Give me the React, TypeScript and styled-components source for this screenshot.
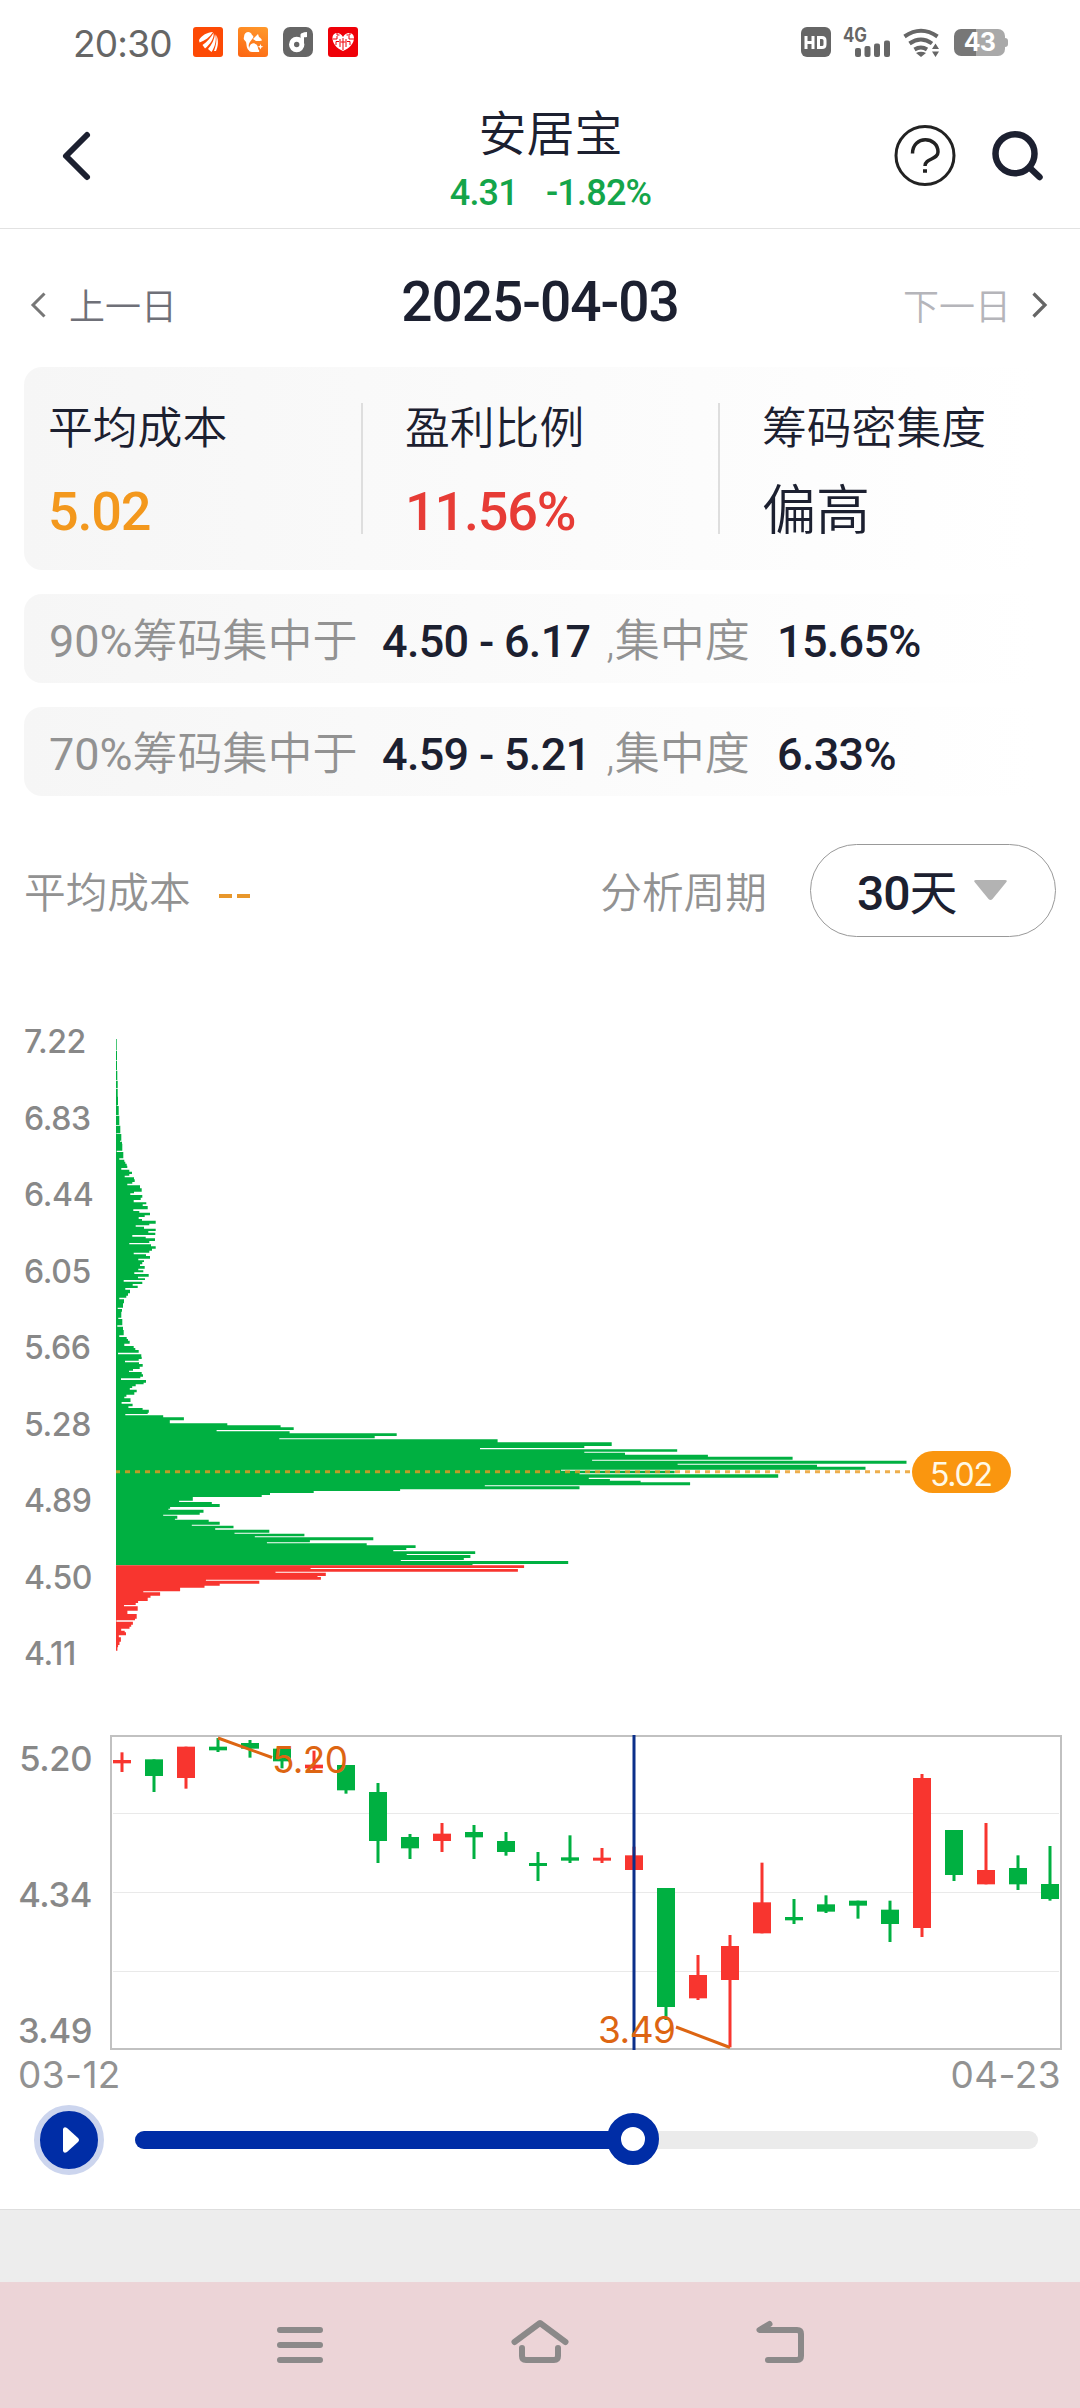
import React from "react";
import styled, { createGlobalStyle, css } from "styled-components";

const DIN = `Roboto, "Noto Sans CJK SC", sans-serif`;
const UI = `Inter, "Noto Sans CJK SC", sans-serif`;
const INK = "#1c2030";
const GREEN = "#00b041";
const RED = "#f8352f";
const ACCENT = "#dd6512";
const BLUE = "#002da6";

const Global = createGlobalStyle`
  * { box-sizing: border-box; }
  body { margin: 0; background: #fff; }
  svg { display: block; flex: none; }
`;

const Page = styled.main`
  width: 1080px;
  height: 2408px;
  display: flex;
  flex-direction: column;
  background: #fff;
  color: ${INK};
  font-family: ${DIN};
  white-space: nowrap;
  overflow: hidden;
`;

/* ---------- status bar ---------- */
const StatusBar = styled.header`
  height: 84px;
  padding: 0 72px 0 73px;
  display: flex;
  align-items: center;
  justify-content: space-between;
`;
const StatusSide = styled.div<{ $gap: number }>`
  display: flex;
  align-items: center;
  gap: ${(p) => p.$gap}px;
`;
const Clock = styled.span`
  width: 105px;
  font: 400 37px/44px ${UI};
  letter-spacing: -0.8px;
  color: #666;
  padding-top: 4px;
`;
const AppIcon = styled.span<{ $bg: string; $r?: number }>`
  width: 30px;
  height: 30px;
  border-radius: ${(p) => p.$r ?? 3}px;
  background: ${(p) => p.$bg};
`;
const Battery = styled.span`
  display: flex;
  align-items: center;
`;
const BatteryBody = styled.span`
  width: 51px;
  height: 27px;
  border-radius: 7px;
  display: flex;
  align-items: center;
  justify-content: center;
  background: linear-gradient(90deg, #777 43%, #a9a9a9 43%);
  color: #fff;
  font: 700 25px/27px ${UI};
  letter-spacing: -0.8px;
`;
const BatteryCap = styled.span`
  width: 3px;
  height: 9px;
  border-radius: 0 3px 3px 0;
  background: #a9a9a9;
`;

/* ---------- title bar ---------- */
const TitleBar = styled.nav`
  height: 145px;
  border-bottom: 1px solid #e2e2e2;
  padding: 0 35px 0 60px;
  display: grid;
  grid-template-columns: 1fr auto 1fr;
  align-items: center;
`;
const TitleStack = styled.div`
  display: flex;
  flex-direction: column;
  align-items: center;
  height: 130px;
  margin-right: 4px;
`;
const StockName = styled.h1`
  margin: 10px 0 0;
  font: 350 48px/68px ${DIN};
`;
const Quote = styled.div`
  display: flex;
  gap: 28px;
  font: 500 36px/42px ${DIN};
  letter-spacing: -0.8px;
  color: #14a54a;
  margin-top: 3px;
`;
const TitleActions = styled.div`
  display: flex;
  justify-content: flex-end;
  align-items: center;
  gap: 35px;
`;

/* ---------- day switcher ---------- */
const DayRow = styled.section`
  height: 138px;
  padding: 8px 32px 0 30px;
  display: grid;
  grid-template-columns: 1fr auto 1fr;
  align-items: center;
`;
const DayLink = styled.div<{ $muted?: boolean }>`
  display: flex;
  align-items: center;
  gap: ${(p) => (p.$muted ? 21 : 23)}px;
  margin-top: 6px;
  font: 350 36px/44px ${DIN};
  color: ${(p) => (p.$muted ? "#b5b5ba" : "#6f7078")};
  ${(p) => p.$muted && css`justify-content: flex-end;`}
`;
const DayText = styled.span`
  padding-top: 6px;
`;
const CurrentDay = styled.h2`
  margin: 0;
  padding-left: 2px;
  font: 500 55px/60px ${DIN};
  letter-spacing: -1px;
`;

/* ---------- summary cards ---------- */
const fade = css`
  background: linear-gradient(90deg, #f6f6f6, #fff 98%);
  border-radius: 18px;
  margin: 0 24px;
`;
const Summary = styled.section`
  ${fade}
  height: 203px;
  display: flex;
  align-items: center;
`;
const Metric = styled.div<{ $first?: boolean }>`
  flex: none;
  width: ${(p) => (p.$first ? 337 : 357)}px;
  height: 131px;
  padding: 3px 0 0 ${(p) => (p.$first ? 24 : 42)}px;
  ${(p) => !p.$first && css`border-left: 2px solid #dedede;`}
  display: flex;
  flex-direction: column;
`;
const MetricName = styled.span`
  font: 350 44.8px/46px ${DIN};
`;
const MetricValue = styled.span<{ $color?: string; $cjk?: boolean }>`
  margin-top: ${(p) => (p.$cjk ? 30 : 30)}px;
  color: ${(p) => p.$color ?? INK};
  font: ${(p) => (p.$cjk ? "350 54px" : "500 54px")}/60px ${DIN};
  letter-spacing: ${(p) => (p.$cjk ? 0 : -1.2)}px;
`;
const RangeRow = styled.section`
  ${fade}
  height: 89px;
  margin-top: 24px;
  padding: 6px 0 0 25px;
  display: flex;
  align-items: center;
  font: 400 45px/60px ${DIN};
  color: #929292;
`;
const RangeLabel = styled.span<{ $w: number }>`
  width: ${(p) => p.$w}px;
  font-weight: 350;
`;
const Percent = styled.span`
  font-weight: 400;
`;
const RangeValue = styled.span<{ $w?: number }>`
  width: ${(p) => (p.$w ? p.$w + "px" : "auto")};
  font-weight: 500;
  letter-spacing: -0.7px;
  color: ${INK};
`;

/* ---------- period filter ---------- */
const FilterRow = styled.section`
  height: 93px;
  margin-top: 48px;
  padding: 0 24px;
  display: flex;
  align-items: center;
  font: 350 41.7px/50px ${DIN};
  color: #929292;
`;
const FilterLabel = styled.span`
  padding-top: 6px;
`;
const Dashes = styled.span`
  flex: 1;
  display: flex;
  padding: 11px 0 0 28px;
  gap: 5px;
`;
const Dash = styled.i`
  width: 13px;
  height: 4px;
  background: #e8972b;
`;
const PeriodButton = styled.button`
  width: 246px;
  height: 93px;
  margin-left: 43px;
  padding: 0 0 0 46px;
  border: 1px solid #999;
  border-radius: 47px;
  background: #fff;
  display: flex;
  align-items: center;
  gap: 19px;
  font: 500 48px/60px ${DIN};
  color: ${INK};
`;
const PeriodText = styled.span`
  display: flex;
  padding-top: 6px;
  letter-spacing: -1px;
  width: 98px;
`;
const PeriodUnit = styled.span`
  font-weight: 400;
`;

/* ---------- charts ---------- */
const ChipPanel = styled.section`
  margin-top: 84px;
  height: 652px;
  display: flex;
`;
const ChipAxis = styled.div`
  width: 116px;
  padding: 1px 0 0 24px;
  margin-bottom: -1px;
  display: flex;
  flex-direction: column;
  justify-content: space-between;
  font: 500 32px/40px ${UI};
  letter-spacing: -0.4px;
  color: #888;
`;
const CandlePanel = styled.section`
  margin-top: 62px;
  height: 315px;
  display: flex;
`;
const CandleAxis = styled.div`
  width: 110px;
  padding: 4px 18px 0 0;
  margin-bottom: -1px;
  display: flex;
  flex-direction: column;
  justify-content: space-between;
  text-align: right;
  font: 500 34.5px/40px ${UI};
  letter-spacing: -0.4px;
  color: #888;
`;
const DateAxis = styled.div`
  height: 49px;
  padding: 0 19px 0 18px;
  display: flex;
  justify-content: space-between;
  font: 400 37px/50px ${UI};
  letter-spacing: 0.4px;
  color: #929292;
`;

/* ---------- playback ---------- */
const Playback = styled.section`
  height: 110px;
  padding: 6px 42px 0 34px;
  display: flex;
  align-items: flex-start;
  gap: 31px;
`;
const PlayButton = styled.button`
  width: 70px;
  height: 70px;
  padding: 0 0 0 3px;
  border: 6px solid #ccd5ee;
  border-radius: 50%;
  background: ${BLUE};
  display: flex;
  align-items: center;
  justify-content: center;
`;
const Track = styled.div`
  flex: 1;
  height: 18px;
  margin-top: 26px;
  border-radius: 9px;
  background: #ebebeb;
  display: flex;
  align-items: center;
`;
const TrackFill = styled.div`
  width: 490px;
  height: 18px;
  border-radius: 9px 0 0 9px;
  background: ${BLUE};
`;
const Thumb = styled.div`
  width: 52px;
  height: 52px;
  margin: -3px 0 0 -18px;
  border: 14px solid ${BLUE};
  border-radius: 50%;
  background: #fff;
`;

const GreyStrip = styled.div`
  height: 73px;
  border-top: 1px solid #dedede;
  background: #ededed;
`;
const SystemNav = styled.footer`
  flex: 1;
  background: #ecd4d7;
  display: flex;
  justify-content: center;
  gap: 180px;
  padding-top: 30px;
`;

/* Run-length outline of the chip histogram: [end of run, right edge]. */
type Run = [number, number];
const place = (runs: Run[], ox: number, sx: number, oy: number, sy: number): Run[] =>
  runs.map(([y, x]) => [oy + y / sy, ox + x / sx]);

const upper: Run[] = [
  [120,350],[122,348],[150,351],[152,348],[180,351],[182,348],[210,352],[212,348],[234,353],[236,348],[260,353],[286,354],[288,350],[315,356],[317,348],[345,358],[347,348],[370,361],[372,349],[392,364],[395,360],[401,366],[422,367],[426,350],[445,370],[449,358],[455,373],[461,376],[467,380],[474,382],[479,364],[485,388],[492,396],[497,388],[502,374],[508,402],[516,404],[521,397],[526,382],[535,420],[545,425],[550,402],[555,391],[563,427],[570,422],[577,401],[583,439],[588,428],[598,443],[603,400],[608,418],[616,450],[621,434],[627,416],[632,426],[641,467],[646,448],[650,407],[656,432],[663,467],[668,445],[675,466],[680,397],[685,437],[693,465],[699,448],[703,388],[709,453],[716,467],[722,456],[728,448],[733,401],[738,438],[746,450],[751,415],[756,432],[763,427],[768,420],[776,434],[781,415],[787,430],[792,403],[800,446],[805,414],[810,435],[815,371],[822,427],[827,398],[834,413],[839,376],[850,390],[857,384],[863,379],[868,358],[880,372],[893,369],[897,353],[905,366],[923,364],[927,355],[946,367],[950,352],[960,369],[976,371],[981,358],[987,380],[992,384],[1001,389],[1008,373],[1014,401],[1020,406],[1028,416],[1033,354],[1040,424],[1047,425],[1052,416],[1057,375],[1062,417],[1070,428],[1077,419],[1082,399],[1086,387],[1093,425],[1100,429],[1105,421],[1110,363],
];
const shoulder: Run[] = [
  [8,424],[13,417],[19,394],[24,384],[29,377],[37,397],[44,390],[50,367],[55,361],[66,379],[71,353],[79,385],[84,373],[89,414],[98,432],[102,429],[106,364],[112,474],[121,534],[130,493],[136,660],[142,815],[150,853],[154,629],[160,841],[168,1152],[175,1088],[178,811],[187,1445],
];
const peak: Run[] = [
  [138,302],[144,228],[148,-54],[155,479],[158,228],[164,338],[170,562],[179,791],[182,249],[191,1099],[194,480],[200,857],[209,988],[212,165],[220,472],[223,215],[233,752],[237,240],[242,297],[247,380],[256,514],[259,-41],[268,215],
];
const lower: Run[] = [
  [333,1162],[339,911],[345,784],[351,760],[362,560],[366,520],[372,615],[381,638],[386,494],[389,489],[398,591],[404,580],[407,474],[416,515],[419,508],[425,606],[434,638],[437,557],[445,678],[449,625],[458,782],[461,681],[469,884],[472,740],[481,1084],[487,900],[490,775],[496,1065],[504,1207],[510,1180],[514,1142],[522,1380],[525,1181],[534,1366],[540,1347],[543,1164],[552,1650],[556,1372],
];
const profit: Run[] = [
  [564,1522],[567,902],[575,1504],[578,800],[588,946],[591,922],[599,932],[602,598],[611,753],[617,638],[623,594],[634,523],[637,416],[647,465],[653,437],[663,429],[669,401],[675,394],[679,360],[692,400],[702,370],[716,397],[721,392],[725,338],[734,386],[740,381],[746,376],[752,352],[757,362],[766,366],[772,345],[785,351],[795,347],[802,343],[812,341],
];
const outline = (start: number, runs: Run[]) =>
  `M116 ${start}` + runs.map(([y, x]) => `H${x.toFixed(1)}V${y.toFixed(1)}`).join("") + "H116Z";

const greenPath = outline(1039, [
  ...place(upper, 0, 3, 1010, 3),
  ...place(shoulder, 0, 2.904, 1380, 3),
  ...place(peak, 500, 2.7034, 1400, 3),
  ...place(lower, 0, 2.904, 1380, 3),
]);
const redPath = outline(1565.3, place(profit, 0, 2.904, 1380, 3));

/* [up?, high, body top, body bottom, low] in thirds of a pixel */
const candles: [number, number, number, number, number][] = [
  [1,127,150,160,186],[0,148,148,198,246],[1,110,110,204,236],[0,84,110,121,126],[0,90,99,116,143],
  [0,116,116,154,175],[1,122,164,175,180],[0,165,165,241,251],[0,219,246,393,459],[0,372,381,415,447],
  [1,339,371,393,426],[0,345,366,382,447],[0,366,393,426,437],[0,426,459,468,513],[0,376,442,452,459],
  [1,414,443,452,459],[1,410,436,480,480],[0,534,534,891,930],[1,735,795,865,870],[1,675,708,810,1012],
  [1,458,577,670,670],[0,567,621,631,642],[0,556,583,605,609],[0,572,572,587,626],[0,572,599,642,696],
  [1,192,204,654,681],[0,360,360,495,513],[1,339,480,523,523],[0,436,474,523,540],[0,408,522,567,572],
];

const Label = styled.text<{ $size: number; $fill: string }>`
  font-family: ${UI};
  font-size: ${(p) => p.$size}px;
  fill: ${(p) => p.$fill};
`;

function ChipChart() {
  return (
    <svg width="964" height="652" viewBox="116 1021 964 652">
      <path d={greenPath} fill={GREEN} />
      <path d={redPath} fill={RED} />
      <path d="M116 1471.8H912" stroke="#e89a20" strokeOpacity=".8" strokeWidth="3" strokeDasharray="5 5" strokeDashoffset="1" />
      <rect x="912" y="1451" width="99" height="42" rx="21" fill="#fa960f" />
      <Label x="930" y="1486" $size={32} $fill="#fff9e6" textLength="63">5.02</Label>
    </svg>
  );
}

function CandleChart() {
  return (
    <svg width="952" height="315" viewBox="110 1735 952 315">
      <rect x="111" y="1736" width="950" height="313" fill="none" stroke="#c1c1c1" strokeWidth="2" />
      <path d="M113 1813.5H1059M113 1892.5H1059M113 1971.5H1059" stroke="#e9e9e9" />
      {candles.map(([up, hi, top, bottom, lo], i) => {
        const cx = 122 + i * 32;
        const y = (v: number) => 1710 + v / 3;
        return (
          <g key={i} fill={up ? RED : GREEN}>
            <rect x={cx - 1.5} y={y(hi)} width="3" height={y(lo) - y(hi)} />
            <rect x={cx - 9} y={y(top)} width="18" height={y(bottom) - y(top)} />
          </g>
        );
      })}
      <path d="M634 1735V2050" stroke="#0b2f8a" strokeWidth="3" />
      <path d="M218 1738L272 1757.5M676 2027L730 2047.5" stroke={ACCENT} strokeWidth="3" />
      <Label x="272" y="1772.5" $size={37} $fill={ACCENT} textLength="76">5.20</Label>
      <Label x="598" y="2042.5" $size={37} $fill={ACCENT} textLength="78">3.49</Label>
    </svg>
  );
}

function AppIcons() {
  return (
    <StatusSide $gap={15}>
      <AppIcon $bg="#fd4a05">
        <svg width="30" height="30" viewBox="0 0 30 30" fill="#fff">
          <path d="M6 13C9 8 14 5.500 20 5 17 10 12 13.500 6.500 15.500ZM9.500 18C14 15 18 10.500 20.500 6 21.500 11 17 17.500 12 21.500ZM15 22C19 17.500 21.500 12 22 7 24 12 22 20 18.500 25ZM21 24C23 19 24 13 23.200 8 26 13 25 20 23 24Z" />
        </svg>
      </AppIcon>
      <AppIcon $bg="linear-gradient(200deg,#ff9a2b,#fc6412)">
        <svg width="30" height="30" viewBox="0 0 30 30" fill="#fff">
          <path d="M6 10C6 5 12 3 14 8 18 10 12 13 11 17 10 20 12 22 12 24 8 22 9 18 8 15 7 13 5 13 6 10ZM15 12L20 7 21 10C24 12 25 14 22 14L18 14Z" />
          <path d="M11 23C11 14 20 15 20 21 20 23 22 23 21 25H14C12 25 11 24 11 23Z" />
          <path d="M22.500 17l.8 2 2 .8-2 .8-.8 2-.8-2-2-.8 2-.8z" />
        </svg>
      </AppIcon>
      <AppIcon $bg="#666" $r={7}>
        <svg width="30" height="30" viewBox="0 0 30 30">
          <path d="M17.500 7.500Q18 5.500 24 5V10Q22 10.500 21 10.200V17H17.500Z" fill="#fff" />
          <circle cx="13.700" cy="17.500" r="5.200" fill="none" stroke="#fff" strokeWidth="5" />
        </svg>
      </AppIcon>
      <AppIcon $bg="#ef0008">
        <svg width="30" height="30" viewBox="0 0 30 30">
          <path d="M15 24C8 21 4.500 16 4.500 11 4.500 5 12 4 15 10 18 4 26 5 26 11 26 16 22 21 15 24Z" fill="#fff" />
          <path d="M5 12H9V9M9 5V8H11.500M8 18V14.500H11M22 5V8H18.500M26 12H21V9M22 18V14.500H19M12 12V20M18 12V20M12.500 15H17.500M15 11V23" fill="none" stroke="#ef0008" strokeWidth="1" />
        </svg>
      </AppIcon>
    </StatusSide>
  );
}

function RadioIcons() {
  return (
    <svg width="138" height="48" viewBox="801 18 138 48" fill="#666" overflow="visible">
      <rect x="801" y="27" width="30" height="30" rx="6" />
      <path d="M806 36V49M813 36V49M806 42.500H813M818.500 37.500H822Q825 37.500 825 40.500V44.500Q825 47.500 822 47.500H818.500Z" fill="none" stroke="#fff" strokeWidth="3" />
      <Label x="843" y="42" $size={19.5} $fill="#666" fontWeight="700" textLength="24" lengthAdjust="spacingAndGlyphs">4G</Label>
      <rect x="855" y="48" width="6" height="9" rx="2" />
      <rect x="864.500" y="46" width="6" height="11" rx="2" />
      <rect x="874" y="43.500" width="6" height="13.500" rx="2" />
      <rect x="884" y="40.500" width="6" height="16.500" rx="2" />
      <path d="M904.500 36.500Q921 25 937.500 36.500M909.500 43.500Q921 35.500 932 43.500M914.500 49.500Q921 45.500 927 49.500" fill="none" stroke="#666" strokeWidth="4" />
      <path d="M916 53Q921 50.500 926 53L921 57ZM932 49L935.500 43.500 939 49ZM932 51.500H939L935.500 57Z" />
    </svg>
  );
}

const summary = [
  { name: "平均成本", value: "5.02", color: "#f3981d" },
  { name: "盈利比例", value: "11.56%", color: "#e73c36" },
  { name: "筹码密集度", value: "偏高" },
];
const ranges = [
  { pct: "90%", span: "4.50 - 6.17", density: "15.65%" },
  { pct: "70%", span: "4.59 - 5.21", density: "6.33%" },
];

export default function App() {
  return (
    <Page>
      <Global />
      <StatusBar>
        <StatusSide $gap={15}>
          <Clock>20:30</Clock>
          <AppIcons />
        </StatusSide>
        <StatusSide $gap={15}>
          <RadioIcons />
          <Battery>
            <BatteryBody>43</BatteryBody>
            <BatteryCap />
          </Battery>
        </StatusSide>
      </StatusBar>

      <TitleBar>
        <svg width="32" height="52" viewBox="60 129 32 52">
          <path d="M87 134L66 155L87 176" fill="none" stroke={INK} strokeWidth="6" strokeLinecap="round" strokeLinejoin="round" />
        </svg>
        <TitleStack>
          <StockName>安居宝</StockName>
          <Quote>
            <span>4.31</span>
            <span>-1.82%</span>
          </Quote>
        </TitleStack>
        <TitleActions>
          <svg width="62" height="62" viewBox="894 124 62 62" fill="none" stroke="#222">
            <circle cx="925" cy="154.500" r="29" strokeWidth="3" />
            <path d="M912.500 152.500C912.500 134 938 135 938 151C938 159 925 157 925 165" strokeWidth="3.500" />
            <path d="M923 170H927" strokeWidth="3.500" />
          </svg>
          <svg width="54" height="54" viewBox="991 128 54 54" fill="none" stroke={INK} strokeWidth="6.500">
            <circle cx="1015" cy="152.700" r="19.500" />
            <path d="M1030 167L1039.500 176" strokeLinecap="round" />
          </svg>
        </TitleActions>
      </TitleBar>

      <DayRow>
        <DayLink>
          <svg width="16" height="28" viewBox="0 0 16 28">
            <path d="M14.500 2.500L3 14L14.500 25.500" fill="none" stroke="#777" strokeWidth="3" />
          </svg>
          <DayText>上一日</DayText>
        </DayLink>
        <CurrentDay>2025-04-03</CurrentDay>
        <DayLink $muted>
          <DayText>下一日</DayText>
          <svg width="16" height="28" viewBox="0 0 16 28">
            <path d="M1.500 2.500L13 14L1.500 25.500" fill="none" stroke="#666" strokeWidth="3.200" />
          </svg>
        </DayLink>
      </DayRow>

      <Summary>
        {summary.map((m, i) => (
          <Metric key={m.name} $first={i === 0}>
            <MetricName>{m.name}</MetricName>
            <MetricValue $color={m.color} $cjk={!m.color}>{m.value}</MetricValue>
          </Metric>
        ))}
      </Summary>
      {ranges.map((r) => (
        <RangeRow key={r.pct}>
          <RangeLabel $w={333}>
            <Percent>{r.pct}</Percent>筹码集中于
          </RangeLabel>
          <RangeValue $w={224}>{r.span}</RangeValue>
          <RangeLabel $w={171}>,集中度</RangeLabel>
          <RangeValue>{r.density}</RangeValue>
        </RangeRow>
      ))}

      <FilterRow>
        <FilterLabel>平均成本</FilterLabel>
        <Dashes>
          <Dash />
          <Dash />
        </Dashes>
        <FilterLabel>分析周期</FilterLabel>
        <PeriodButton>
          <PeriodText>
            30<PeriodUnit>天</PeriodUnit>
          </PeriodText>
          <svg width="33" height="21" viewBox="0 0 33 21">
            <path d="M2 0H31Q34 0 32 2.500L18.500 19Q16.500 21 14.500 19L1 2.500Q-1 0 2 0Z" fill="#b3b3b3" />
          </svg>
        </PeriodButton>
      </FilterRow>

      <ChipPanel>
        <ChipAxis>
          {["7.22", "6.83", "6.44", "6.05", "5.66", "5.28", "4.89", "4.50", "4.11"].map((v) => (
            <span key={v}>{v}</span>
          ))}
        </ChipAxis>
        <ChipChart />
      </ChipPanel>

      <CandlePanel>
        <CandleAxis>
          {["5.20", "4.34", "3.49"].map((v) => (
            <span key={v}>{v}</span>
          ))}
        </CandleAxis>
        <CandleChart />
      </CandlePanel>
      <DateAxis>
        <span>03-12</span>
        <span>04-23</span>
      </DateAxis>

      <Playback>
        <PlayButton aria-label="播放">
          <svg width="18" height="28" viewBox="0 0 18 28">
            <path d="M1 3Q2 0 5 2L16 12Q18 14 16 16L5 26Q2 28 1 25Z" fill="#fff" />
          </svg>
        </PlayButton>
        <Track>
          <TrackFill />
          <Thumb />
        </Track>
      </Playback>

      <GreyStrip />
      <SystemNav>
        <svg width="60" height="60" viewBox="270 2312 60 60" stroke="#8b8989" strokeWidth="6" strokeLinecap="round">
          <path d="M280 2330H320M280 2345H320M280 2360H320" />
        </svg>
        <svg width="60" height="60" viewBox="510 2312 60 60" fill="none" stroke="#8b8989" strokeWidth="6" strokeLinecap="round" strokeLinejoin="round">
          <path d="M514.500 2342L540 2323L565.500 2342M522 2348V2356Q522 2360 526 2360H554Q558 2360 558 2356V2348" />
        </svg>
        <svg width="60" height="60" viewBox="750 2312 60 60" fill="none" stroke="#8b8989" strokeWidth="6" strokeLinecap="round" strokeLinejoin="round">
          <path d="M769.500 2324L759.500 2330H797Q801 2330 801 2334V2356Q801 2360 797 2360H768" />
        </svg>
      </SystemNav>
    </Page>
  );
}
